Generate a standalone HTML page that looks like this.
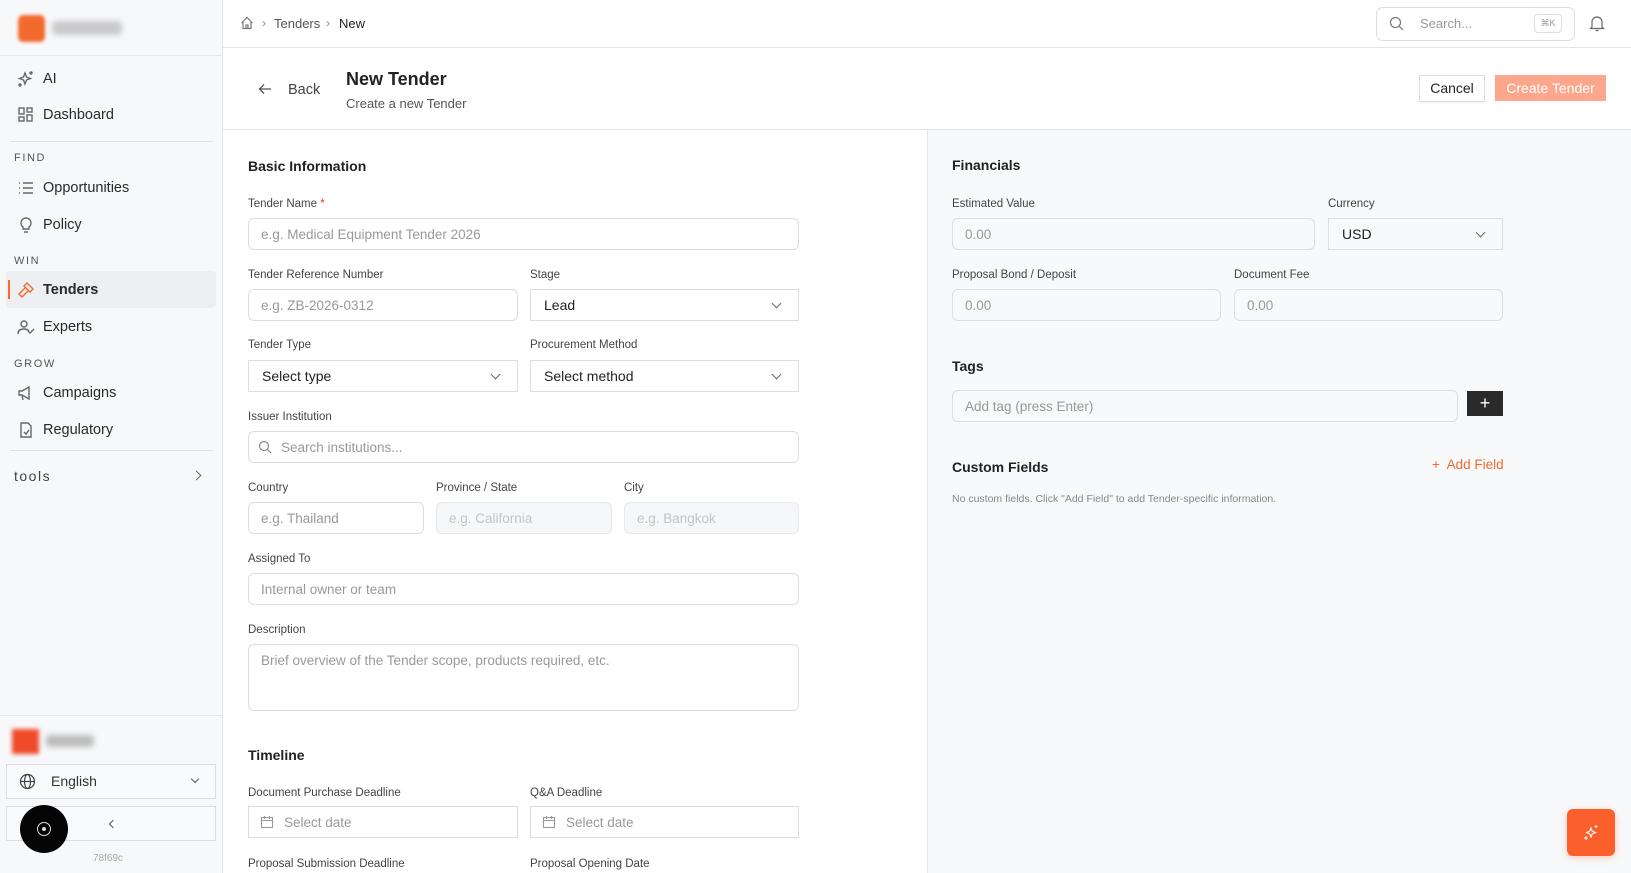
<!DOCTYPE html>
<html><head><meta charset="utf-8"><style>
*{box-sizing:border-box;margin:0;padding:0}
body{width:1631px;height:873px;overflow:hidden;font-family:"Liberation Sans",sans-serif;background:#fff;position:relative;color:#222}
.a{position:absolute}
.sb{left:0;top:0;width:223px;height:873px;background:#f7f8fa;border-right:1px solid #e4e5e8}
.nav{position:absolute;left:17px;font-size:14.5px;color:#2a2a2a;display:flex;align-items:center;gap:0}
.nav svg{width:18px;height:18px;margin-right:8px;stroke:#666;fill:none;stroke-width:1.4}
.sec{position:absolute;left:14px;font-size:11px;letter-spacing:1.6px;color:#555}
.lbl{position:absolute;font-size:11.5px;color:#444}
.in{position:absolute;height:32px;border:1px solid #dcdde0;border-radius:6px;background:#fff;font-size:13.5px;color:#999;padding-left:12px;display:flex;align-items:center}
.sel{position:absolute;height:32px;border:1px solid #dcdde0;background:#fff;font-size:14px;color:#222;padding-left:13px;display:flex;align-items:center}
.sel:after{content:"";position:absolute;right:18px;top:10px;width:6px;height:6px;border-right:1px solid #666;border-bottom:1px solid #666;transform:rotate(45deg)}
.dis{background:#f6f7f8;color:#c4c4c4;border-color:#e8e9eb}
.h{position:absolute;font-size:14px;font-weight:bold;color:#222}
.rp .in{background:#f8f9fa}
</style></head><body>
<div class="a sb">
 <div class="a" style="left:18px;top:15px;width:27px;height:27px;border-radius:5px;background:#f26a2e;filter:blur(1.5px)"></div>
 <div class="a" style="left:52px;top:21px;width:70px;height:14px;background:#c9c9cc;border-radius:4px;filter:blur(3px)"></div>
 <div class="a" style="left:0;top:55px;width:223px;border-top:1px solid #e4e5e8"></div>
 <div class="nav" style="top:70px"><svg viewBox="0 0 18 18"><path d="M8 3l1.5 4 4 1.5-4 1.5L8 14l-1.5-4L2.5 8.5l4-1.5z"/><circle cx="14" cy="3" r="1"/><circle cx="3" cy="15" r="1"/></svg>AI</div>
 <div class="nav" style="top:106px"><svg viewBox="0 0 18 18"><rect x="2" y="2" width="5" height="6"/><rect x="10" y="2" width="5" height="4"/><rect x="2" y="11" width="5" height="4"/><rect x="10" y="9" width="5" height="6"/></svg>Dashboard</div>
 <div class="a" style="left:10px;top:141px;width:203px;border-top:1px solid #e0e1e4"></div>
 <div class="sec" style="top:152px">FIND</div>
 <div class="nav" style="top:179px"><svg viewBox="0 0 18 18"><path d="M2 4h1M6 4h10M2 9h1M6 9h10M2 14h1M6 14h10"/></svg>Opportunities</div>
 <div class="nav" style="top:216px"><svg viewBox="0 0 18 18"><path d="M9 2a5 5 0 0 0-3 9v2h6v-2a5 5 0 0 0-3-9zM7 16h4"/></svg>Policy</div>
 <div class="sec" style="top:255px">WIN</div>
 <div class="a" style="left:6px;top:271px;width:210px;height:37px;background:#eceef1;border-radius:4px"></div>
 <div class="a" style="left:8px;top:280px;width:2px;height:19px;background:#f26a2e"></div>
 <div class="nav" style="top:281px;font-weight:bold"><svg viewBox="0 0 18 18" style="stroke:#f26a2e"><path d="M10 2l6 6-3 3-6-6zM8 7l-6 6 3 3 6-6"/></svg>Tenders</div>
 <div class="nav" style="top:318px"><svg viewBox="0 0 18 18"><circle cx="7" cy="6" r="3"/><path d="M1 16c0-4 3-5 6-5s4 1 5 2M11 13l2 2 4-4"/></svg>Experts</div>
 <div class="sec" style="top:358px">GROW</div>
 <div class="nav" style="top:384px"><svg viewBox="0 0 18 18"><path d="M2 7v4h3l7 4V3L5 7zM5 11l1 5"/></svg>Campaigns</div>
 <div class="nav" style="top:421px"><svg viewBox="0 0 18 18"><path d="M4 2h7l3 3v11H4zM7 11l2 2 3-4"/></svg>Regulatory</div>
 <div class="a" style="left:10px;top:450px;width:203px;border-top:1px solid #e0e1e4"></div>
 <div class="a" style="left:14px;top:468px;font-size:14px;letter-spacing:1.5px;color:#444">tools</div>
 <div class="a" style="left:193px;top:472px;width:7px;height:7px;border-right:1.3px solid #666;border-top:1.3px solid #666;transform:rotate(45deg)"></div>
 <div class="a" style="left:0;top:715px;width:223px;border-top:1px solid #e4e5e8"></div>
 <div class="a" style="left:12px;top:729px;width:27px;height:25px;background:#f04a2a;filter:blur(2px)"></div>
 <div class="a" style="left:46px;top:735px;width:48px;height:12px;background:#bbb;border-radius:4px;filter:blur(3px)"></div>
 <div class="a" style="left:6px;top:764px;width:210px;height:35px;border:1px solid #dcdde0;background:#f9fafb"></div>
 <svg class="a" style="left:19px;top:773px" width="17" height="17" viewBox="0 0 17 17" fill="none" stroke="#444" stroke-width="1.2"><circle cx="8.5" cy="8.5" r="7"/><ellipse cx="8.5" cy="8.5" rx="3" ry="7"/><path d="M1.5 8.5h14"/></svg>
 <div class="a" style="left:51px;top:773px;font-size:14px;color:#333">English</div>
 <div class="a" style="left:192px;top:776px;width:6px;height:6px;border-right:1.2px solid #555;border-bottom:1.2px solid #555;transform:rotate(45deg)"></div>
 <div class="a" style="left:6px;top:806px;width:210px;height:35px;border:1px solid #dcdde0;background:#f9fafb"></div>
 <div class="a" style="left:110px;top:821px;width:6px;height:6px;border-left:1.2px solid #555;border-bottom:1.2px solid #555;transform:rotate(45deg)"></div>
 <div class="a" style="left:20px;top:805px;width:48px;height:48px;border-radius:50%;background:#050505"></div>
 <div class="a" style="left:37px;top:822px;width:14px;height:14px;border-radius:50%;border:1px solid #ddd"></div>
 <div class="a" style="left:42px;top:827px;width:4px;height:4px;border-radius:50%;background:#ddd"></div>
 <div class="a" style="left:93px;top:853px;font-size:10px;color:#aaa">78f69c</div>
</div>
<!-- header -->
<div class="a" style="left:223px;top:47px;width:1408px;border-top:1px solid #e4e5e8"></div>
<svg class="a" style="left:240px;top:16px" width="14" height="14" viewBox="0 0 14 14" fill="none" stroke="#777" stroke-width="1.2"><path d="M1.5 7L7 1.5 12.5 7M3 6v6.5h8V6M6 12.5V9h2v3.5"/></svg>
<div class="a" style="left:262px;top:16px;font-size:12px;color:#888">›</div>
<div class="a" style="left:274px;top:16px;font-size:13px;color:#555">Tenders</div>
<div class="a" style="left:326px;top:16px;font-size:12px;color:#888">›</div>
<div class="a" style="left:339px;top:16px;font-size:13px;color:#222">New</div>
<div class="a" style="left:1376px;top:7px;width:199px;height:34px;border:1px solid #dcdde0;border-radius:7px"></div>
<svg class="a" style="left:1389px;top:16px" width="15" height="15" viewBox="0 0 15 15" fill="none" stroke="#777" stroke-width="1.2"><circle cx="6.5" cy="6.5" r="5"/><path d="M10 10l4 4"/></svg>
<div class="a" style="left:1420px;top:16px;font-size:13px;color:#999">Search...</div>
<div class="a" style="left:1534px;top:14px;width:28px;height:19px;border:1px solid #ddd;border-radius:4px;font-size:9px;color:#999;text-align:center;line-height:17px">⌘K</div>
<svg class="a" style="left:1589px;top:15px" width="16" height="17" viewBox="0 0 16 17" fill="none" stroke="#666" stroke-width="1.2"><path d="M3 12V7a5 5 0 0 1 10 0v5l1.5 1.5h-13zM6.5 15.5h3"/></svg>
<!-- page head -->
<svg class="a" style="left:258px;top:83px" width="14" height="12" viewBox="0 0 14 12" fill="none" stroke="#555" stroke-width="1.3"><path d="M13 6H1.5M6 1.5L1.5 6 6 10.5"/></svg>
<div class="a" style="left:288px;top:82px;font-size:14.5px;color:#444">Back</div>
<div class="a" style="left:346px;top:69px;font-size:18px;font-weight:bold;color:#222">New Tender</div>
<div class="a" style="left:346px;top:96px;font-size:13px;color:#555">Create a new Tender</div>
<div class="a" style="left:1419px;top:75px;width:66px;height:27px;border:1px solid #dcdde0;font-size:14px;color:#222;text-align:center;line-height:25px;box-shadow:0 1px 2px rgba(0,0,0,.06)">Cancel</div>
<div class="a" style="left:1495px;top:75px;width:111px;height:26px;background:#fca68b;font-size:14px;color:#fff;text-align:center;line-height:26px">Create Tender</div>
<div class="a" style="left:223px;top:129px;width:1408px;border-top:1px solid #e4e5e8"></div>
<!-- right panel -->
<div class="a rp" style="left:927px;top:130px;width:704px;height:743px;background:#f8f9fb;border-left:1px solid #e4e5e8">
</div>
<div class="rp">
<div class="h" style="left:952px;top:157px">Financials</div>
<div class="lbl" style="left:952px;top:198px">Estimated Value</div>
<div class="in" style="left:952px;top:218px;width:363px">0.00</div>
<div class="lbl" style="left:1328px;top:198px">Currency</div>
<div class="sel" style="left:1328px;top:218px;width:175px;background:#f8f9fb">USD</div>
<div class="lbl" style="left:952px;top:269px">Proposal Bond / Deposit</div>
<div class="in" style="left:952px;top:289px;width:269px">0.00</div>
<div class="lbl" style="left:1234px;top:269px">Document Fee</div>
<div class="in" style="left:1234px;top:289px;width:269px">0.00</div>
<div class="h" style="left:952px;top:358px">Tags</div>
<div class="in" style="left:952px;top:390px;width:506px">Add tag (press Enter)</div>
<div class="a" style="left:1467px;top:391px;width:36px;height:25px;background:#2a2a2a;color:#fff;font-size:18px;text-align:center;line-height:24px">+</div>
<div class="h" style="left:952px;top:459px">Custom Fields</div>
<div class="a" style="left:1432px;top:457px;font-size:13.5px;color:#f26a2e">+&nbsp; Add Field</div>
<div class="a" style="left:952px;top:493px;font-size:10.5px;color:#888">No custom fields. Click "Add Field" to add Tender-specific information.</div>
</div>
<!-- left form -->
<div class="h" style="left:248px;top:158px">Basic Information</div>
<div class="lbl" style="left:248px;top:198px">Tender Name <span style="color:#e33">*</span></div>
<div class="in" style="left:248px;top:218px;width:551px">e.g. Medical Equipment Tender 2026</div>
<div class="lbl" style="left:248px;top:269px">Tender Reference Number</div>
<div class="in" style="left:248px;top:289px;width:270px">e.g. ZB-2026-0312</div>
<div class="lbl" style="left:530px;top:269px">Stage</div>
<div class="sel" style="left:530px;top:289px;width:269px">Lead</div>
<div class="lbl" style="left:248px;top:339px">Tender Type</div>
<div class="sel" style="left:248px;top:360px;width:270px">Select type</div>
<div class="lbl" style="left:530px;top:339px">Procurement Method</div>
<div class="sel" style="left:530px;top:360px;width:269px">Select method</div>
<div class="lbl" style="left:248px;top:411px">Issuer Institution</div>
<div class="in" style="left:248px;top:431px;width:551px;padding-left:32px">Search institutions...</div>
<svg class="a" style="left:258px;top:440px" width="14" height="14" viewBox="0 0 14 14" fill="none" stroke="#888" stroke-width="1.2"><circle cx="6" cy="6" r="4.5"/><path d="M9.5 9.5l3.5 3.5"/></svg>
<div class="lbl" style="left:248px;top:482px">Country</div>
<div class="in" style="left:248px;top:502px;width:176px">e.g. Thailand</div>
<div class="lbl" style="left:436px;top:482px">Province / State</div>
<div class="in dis" style="left:436px;top:502px;width:176px">e.g. California</div>
<div class="lbl" style="left:624px;top:482px">City</div>
<div class="in dis" style="left:624px;top:502px;width:175px">e.g. Bangkok</div>
<div class="lbl" style="left:248px;top:553px">Assigned To</div>
<div class="in" style="left:248px;top:573px;width:551px">Internal owner or team</div>
<div class="lbl" style="left:248px;top:624px">Description</div>
<div class="in" style="left:248px;top:644px;width:551px;height:67px;align-items:flex-start;padding-top:8px">Brief overview of the Tender scope, products required, etc.</div>
<div class="h" style="left:248px;top:747px">Timeline</div>
<div class="lbl" style="left:248px;top:787px">Document Purchase Deadline</div>
<div class="in" style="left:248px;top:806px;width:270px;border-radius:0;padding-left:35px">Select date</div>
<svg class="a" style="left:260px;top:815px" width="14" height="14" viewBox="0 0 14 14" fill="none" stroke="#999" stroke-width="1.1"><rect x="1.5" y="2.5" width="11" height="10"/><path d="M1.5 5.5h11M4.5 1v3M9.5 1v3"/></svg>
<div class="lbl" style="left:530px;top:787px">Q&amp;A Deadline</div>
<div class="in" style="left:530px;top:806px;width:269px;border-radius:0;padding-left:35px">Select date</div>
<svg class="a" style="left:542px;top:815px" width="14" height="14" viewBox="0 0 14 14" fill="none" stroke="#999" stroke-width="1.1"><rect x="1.5" y="2.5" width="11" height="10"/><path d="M1.5 5.5h11M4.5 1v3M9.5 1v3"/></svg>
<div class="lbl" style="left:248px;top:858px">Proposal Submission Deadline</div>
<div class="lbl" style="left:530px;top:858px">Proposal Opening Date</div>
<!-- fab -->
<div class="a" style="left:1567px;top:809px;width:48px;height:47px;border-radius:6px;background:#fb5f2c;box-shadow:0 2px 8px rgba(251,95,44,.3)"></div>
<svg class="a" style="left:1583px;top:824px" width="17" height="17" viewBox="0 0 17 17" fill="none" stroke="#fff" stroke-width="1.1"><path d="M8 4l1.3 3.2 3.2 1.3-3.2 1.3L8 13l-1.3-3.2-3.2-1.3 3.2-1.3z"/><path d="M13 1v3M11.5 2.5h3"/><circle cx="3" cy="14" r="1"/></svg>
</body></html>
